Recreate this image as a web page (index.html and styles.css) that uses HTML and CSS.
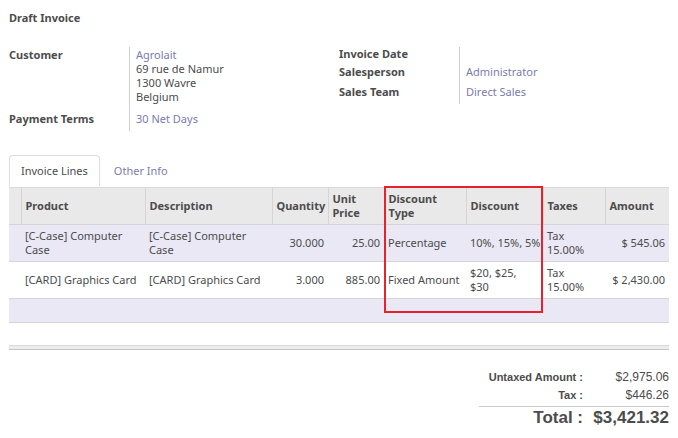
FILE: index.html
```html
<!DOCTYPE html>
<html>
<head>
<meta charset="utf-8">
<link rel="stylesheet" href="styles.css">
</head>
<body>
<div class="page">
  <div class="title">Draft Invoice</div>

  <div class="groups">
    <div class="group">
      <div class="lbl r-cust">Customer</div>
      <div class="val r-cust">
        <a class="link">Agrolait</a><br>69 rue de Namur<br>1300 Wavre<br>Belgium
      </div>
      <div class="lbl r-terms">Payment Terms</div>
      <div class="val r-terms"><a class="link">30 Net Days</a></div>
    </div>
    <div class="group">
      <div class="lbl r-date">Invoice Date</div>
      <div class="val r-date"></div>
      <div class="lbl r-sp">Salesperson</div>
      <div class="val r-sp"><a class="link">Administrator</a></div>
      <div class="lbl r-team">Sales Team</div>
      <div class="val r-team"><a class="link">Direct Sales</a></div>
    </div>
  </div>

  <div class="tabs">
    <div class="tab active">Invoice Lines</div>
    <div class="tab">Other Info</div>
  </div>

  <div class="tablewrap">
    <table class="lines">
      <colgroup>
        <col class="c-sel"><col class="c-prod"><col class="c-desc"><col class="c-qty"><col class="c-price"><col class="c-dtype"><col class="c-disc"><col class="c-tax"><col class="c-amt">
      </colgroup>
      <thead>
        <tr>
          <th></th>
          <th>Product</th>
          <th>Description</th>
          <th>Quantity</th>
          <th>Unit<br>Price</th>
          <th>Discount<br>Type</th>
          <th>Discount</th>
          <th>Taxes</th>
          <th>Amount</th>
        </tr>
      </thead>
      <tbody>
        <tr class="odd">
          <td></td>
          <td>[C-Case] Computer Case</td>
          <td>[C-Case] Computer Case</td>
          <td class="num">30.000</td>
          <td class="num">25.00</td>
          <td>Percentage</td>
          <td class="nowrap">10%, 15%, 5%</td>
          <td>Tax<br>15.00%</td>
          <td class="num">$ 545.06</td>
        </tr>
        <tr>
          <td></td>
          <td>[CARD] Graphics Card</td>
          <td>[CARD] Graphics Card</td>
          <td class="num">3.000</td>
          <td class="num">885.00</td>
          <td>Fixed Amount</td>
          <td>$20, $25,<br>$30</td>
          <td>Tax<br>15.00%</td>
          <td class="num">$ 2,430.00</td>
        </tr>
        <tr class="odd empty">
          <td></td><td></td><td></td><td></td><td></td><td></td><td></td><td></td><td></td>
        </tr>
      </tbody>
    </table>
    <div class="highlight"></div>
  </div>

  <div class="footbar"></div>

  <div class="totals">
    <div class="t-lbl">Untaxed Amount :</div><div class="t-val">$2,975.06</div>
    <div class="t-lbl">Tax :</div><div class="t-val">$446.26</div>
    <div class="t-lbl big">Total :</div><div class="t-val big">$3,421.32</div>
  </div>
</div>
</body>
</html>
```

FILE: styles.css
```css
html, body {
  margin: 0;
  padding: 0;
  background: #ffffff;
}
body {
  font-family: "Noto Sans", sans-serif;
  font-size: 11px;
  color: #4c4c4c;
  line-height: 14px;
}
.page {
  padding: 11px 9px 0 9px;
}
.title {
  font-weight: bold;
}
.link {
  color: #7c7bad;
  text-decoration: none;
}

.groups {
  display: grid;
  grid-template-columns: 330px 330px;
  margin-top: 22px;
  align-items: start;
}
.group {
  display: grid;
  grid-template-columns: 120px 1fr;
}
.lbl {
  font-weight: bold;
}
.val {
  border-left: 1px solid #cfcfcf;
  padding-left: 6px;
}
.r-cust { padding-top: 1px; padding-bottom: 6px; }
.r-terms { padding-top: 2px; padding-bottom: 5px; }
.r-date { padding-top: 0px; padding-bottom: 2px; }
.r-sp { padding-top: 2px; padding-bottom: 4px; }
.r-team { padding-top: 2px; padding-bottom: 5px; }

.tabs {
  display: flex;
  margin-top: 24px;
  height: 31px;
}
.tab {
  padding: 8px 11px 0 11px;
  color: #7c7bad;
  box-sizing: border-box;
  border: 1px solid transparent;
  border-bottom: none;
  margin-right: 2px;
}
.tab.active {
  color: #4c4c4c;
  border-color: #dddddd;
  border-radius: 4px 4px 0 0;
  background: #ffffff;
}

.tablewrap {
  position: relative;
  margin-top: 1px;
}
.lines {
  width: 660px;
  border-collapse: collapse;
  table-layout: fixed;
}
.c-sel { width: 12px; }
.c-prod { width: 124px; }
.c-desc { width: 127px; }
.c-qty { width: 56px; }
.c-price { width: 56px; }
.c-dtype { width: 82px; }
.c-disc { width: 77px; }
.c-tax { width: 62px; }
.c-amt { width: 64px; }

.lines th {
  background: #e9e9e9;
  text-align: left;
  font-weight: bold;
  height: 37px;
  box-sizing: border-box;
  padding: 0 4px;
  border-top: 1px solid #d9d9d9;
  border-bottom: 1px solid #d5d5d5;
  border-left: 1px solid #d5d5d5;
  vertical-align: middle;
  white-space: nowrap;
}
.lines th:first-child {
  border-left: none;
}
.lines td {
  height: 37px;
  box-sizing: border-box;
  padding: 0 4px 0 4px;
  border-bottom: 1px solid #d5d5d5;
  vertical-align: middle;
}
.lines td.nowrap {
  white-space: nowrap;
  overflow: visible;
}
.lines tr.odd td {
  background: #eae8f5;
}
.lines tr.empty td {
  height: 24px;
}
.lines td.num {
  text-align: right;
  white-space: nowrap;
}
.highlight {
  position: absolute;
  left: 375px;
  top: -1px;
  width: 159px;
  height: 127px;
  box-sizing: border-box;
  border: 2px solid #e8222d;
}

.footbar {
  margin-top: 22px;
  height: 3px;
  background: #ececec;
  border-top: 1px solid #dadada;
  border-bottom: 1px solid #c4c4c4;
  width: 660px;
}

.totals {
  display: grid;
  grid-template-columns: 1fr 80px;
  margin-top: 20px;
  row-gap: 4px;
  margin-left: auto;
  width: 190px;
  font-family: "Liberation Sans", sans-serif;
  white-space: nowrap;
}
.t-lbl {
  text-align: right;
  font-weight: bold;
  font-size: 11px;
  padding-right: 6px;
}
.t-val {
  text-align: right;
  font-size: 12px;
}
.t-lbl.big, .t-val.big {
  font-size: 17px;
  line-height: 19px;
  font-weight: bold;
  border-top: 1px solid #c8c8c8;
  padding-top: 1px;
}
```
